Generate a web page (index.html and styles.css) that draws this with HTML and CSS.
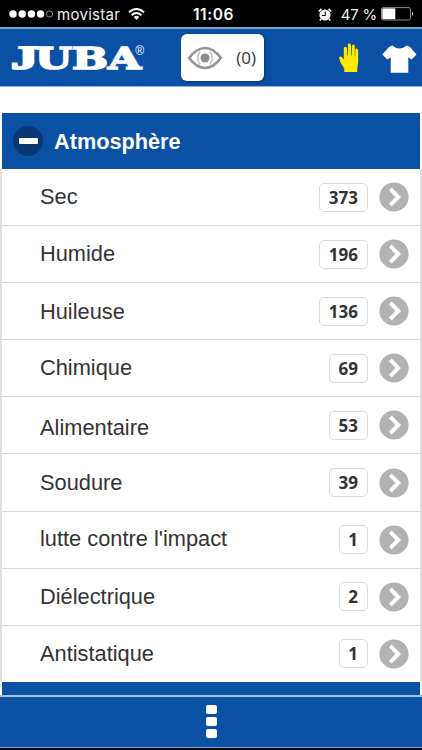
FILE: index.html
```html
<!DOCTYPE html>
<html lang="fr">
<head>
    <meta charset="UTF-8">
    <meta name="viewport" content="width=device-width, initial-scale=1">
    <title>Juba</title>

    <link rel="stylesheet" href="styles.css">
</head>
<body>
    <div class="statusBar">
        <div class="carrier">
            <svg width="44" height="10" viewBox="0 0 44 10">
                <g fill="#fff">
                    <circle cx="4" cy="5" r="3.7"/>
                    <circle cx="13.2" cy="5" r="3.7"/>
                    <circle cx="22.4" cy="5" r="3.7"/>
                    <circle cx="31.6" cy="5" r="3.7"/>
                </g>
                <circle cx="40.6" cy="5" r="3.1" fill="none" stroke="#aaa" stroke-width=".8"/>
            </svg>
            <svg class="carrierName" width="64" height="20" viewBox="0 0 64 20">
                <text x="0" y="15.5" textLength="63" lengthAdjust="spacing">movistar</text>
            </svg>
            <svg class="wifi" width="17" height="12" viewBox="0 0 17 12">
                <g fill="none" stroke="#fff" stroke-width="2">
                    <path d="M1 4.3Q8.5-2.3 16 4.3"/>
                    <path d="M3.7 7.2Q8.5 2.9 13.3 7.2"/>
                </g>
                <path d="M5.7 9Q8.5 6.6 11.3 9L8.5 12Z" fill="#fff"/>
            </svg>
        </div>
        <div class="clock">11:06</div>
        <div class="power">
            <svg width="14" height="13" viewBox="0 0 14 13">
                <circle cx="7" cy="7" r="5.6" fill="#fff"/>
                <path d="M.8 3.5L3.4.8M10.6.8l2.6 2.7M3 11l-1.2 1.5M11 11l1.2 1.5" stroke="#fff" stroke-width="1.7"/>
                <path d="M7.2 3.5v4H4" fill="none" stroke="#000" stroke-width="1.1"/>
            </svg>
            <span class="percent">47 %</span>
            <svg width="33" height="14" viewBox="0 0 33 14">
                <rect x=".5" y=".6" width="29" height="12.4" rx="1.5" fill="none" stroke="#888"/>
                <rect x="1.3" y="1.4" width="13" height="10.8" fill="#fff"/>
                <path d="M31 4.5q2 2.3 0 4.6z" fill="#fff"/>
            </svg>
        </div>
    </div>

    <header class="topBar">
        <svg class="logo" width="140" height="34" viewBox="0 0 140 34">
            <text class="logoText logoHook" x="0" y="28" textLength="27" lengthAdjust="spacingAndGlyphs">J</text>
            <text class="logoText" x="24" y="28" textLength="106" lengthAdjust="spacingAndGlyphs">UBA</text>
            <text class="logoMark" x="124.2" y="14">®</text>
        </svg>
        <div class="viewed">
            <svg width="36" height="28" viewBox="0 0 36 28">
                <path d="M2.2 14Q9.5 4 18 4T33.8 14Q26.5 24 18 24T2.2 14Z" fill="none" stroke="#949494" stroke-width="2.7"/>
                <path d="M13 7.5Q8.5 14 13 20.5M23 7.5Q27.5 14 23 20.5" fill="none" stroke="#c4c4c4" stroke-width="1.6"/>
                <circle cx="18" cy="14" r="4.5" fill="#8c8c8c"/>
            </svg>
            <span>(0)</span>
        </div>
        <div class="products">
            <svg width="20" height="30" viewBox="0 0 20 30">
                <path fill="#fee800" d="M5.3 29V25.5L1.5 19.5L0 14.3Q1.5 12.4 3.3 14.8L4.8 16.5V5.3Q5 3.8 6.3 3.8T7.9 5.3L8.4 12.5H8.9V2.2Q9.1.3 10.4.3T12 2.2L12.4 12.5H12.9V3Q13.1 1.4 14.3 1.4T15.8 3V13.3H16.2V7.2Q16.4 5.6 17.6 5.6T19.2 7.2V19L18.3 25V29Z"/>
            </svg>
            <svg width="35" height="28" viewBox="0 0 35 28">
                <path fill="#fff" d="M10.2.5Q17.5 6.5 24.8.5L28 2L34.5 9.5L29.6 14.5L26.3 12.2V27.8H8.7V12.2L5.4 14.5L.3 9.5L7 2Z"/>
            </svg>
        </div>
    </header>

    <main class="filters">
        <div class="filterTitle">
            <span class="toggle"></span>
            <h2>Atmosphère</h2>
        </div>
        <ul id="values"></ul>
        <div class="nextFilter"></div>
    </main>

    <footer class="bottomBar">
        <span class="dot"></span>
        <span class="dot"></span>
        <span class="dot"></span>
    </footer>

<script>
        // nudge is the label's vertical shift in px
        const values = [
            { name: 'Sec', count: 373, nudge: 0 },
            { name: 'Humide', count: 196, nudge: 0 },
            { name: 'Huileuse', count: 136, nudge: 1 },
            { name: 'Chimique', count: 69, nudge: 0 },
            { name: 'Alimentaire', count: 53, nudge: 3 },
            { name: 'Soudure', count: 39, nudge: 0 },
            { name: "lutte contre l'impact", count: 1, nudge: -1 },
            { name: 'Diélectrique', count: 2, nudge: 0 },
            { name: 'Antistatique', count: 1, nudge: 0 }
        ];

        document.getElementById('values').innerHTML = values.map(value => `
            <li class="row">
                <span class="name" style="transform: translateY(${value.nudge}px)">${value.name}</span>
                <span class="count">${value.count}</span>
                <svg class="arrow" width="30" height="30" viewBox="0 0 30 30">
                    <circle cx="15" cy="15" r="14.6" fill="#b2b2b2"/>
                    <path d="M11.3 6.8L19.3 15L11.3 23.2" fill="none" stroke="#fff" stroke-width="4"/>
                </svg>
            </li>
        `).join('');
</script>

</body>
</html>
```
FILE: styles.css
```css
* {
    box-sizing: border-box;
}

html {
    background: #000;
}

body {
    font-family: "Liberation Sans", Arial, sans-serif;
    margin: 0;
    height: 750px;
    display: flex;
    flex-direction: column;
    overflow: hidden;
    color: #333;
}

svg {
    display: block;
    flex: none;
}

.statusBar {
    flex: none;
    height: 27px;
    padding: 1px 8px 0 9px;
    display: flex;
    align-items: center;
    background: #000;
    color: #fff;
    font-family: Inter, sans-serif;
    font-size: 15px;
}

.carrier, .power {
    flex: 1;
    display: flex;
    align-items: center;
}

.carrierName {
    margin-left: 4px;
    fill: #eee;
    font-size: 15px;
}

.wifi {
    margin-left: 7px;
    margin-bottom: 1px;
}

.clock {
    margin-left: 4px;
    font-weight: 600;
    font-size: 15.5px;
    letter-spacing: 0.6px;
}

.power {
    justify-content: flex-end;
}

.percent {
    margin: 0 4px 0 9px;
    color: #eee;
    white-space: nowrap;
    font-size: 15px;
    letter-spacing: -0.2px;
}

.topBar {
    flex: none;
    height: 60px;
    padding: 0 5px 0 11px;
    display: flex;
    align-items: center;
    background: #0a50a4;
    border-top: 2px solid #7ba1cb;
    border-bottom: 1px solid #91afd2;
}

.logo {
    fill: #fff;
    overflow: visible;
}

.logoText {
    font-family: "DejaVu Serif", serif;
    font-weight: bold;
    font-size: 30px;
    stroke: #fff;
    stroke-width: 1.7px;
}

/* the hook of the J stays on the baseline */
.logoHook {
    font-family: "Liberation Serif", serif;
    font-size: 33px;
    stroke-width: 2px;
}

.logoMark {
    font-family: "Liberation Sans", sans-serif;
    font-size: 12px;
}

.viewed {
    width: 83px;
    height: 47px;
    margin-left: 30px;
    padding: 0 8px 0 6px;
    display: flex;
    align-items: center;
    justify-content: space-between;
    background: #fff;
    border-radius: 6px;
    box-shadow: 1px 1px 3px #063777;
    font-family: "Open Sans", sans-serif;
    font-size: 17px;
}

.products {
    margin-left: auto;
    display: flex;
    align-items: center;
    gap: 23px;
}

.products svg:last-child {
    margin-top: 3px;
}

.filters {
    flex: none;
    height: 608px;
    padding-top: 26px;
    display: flex;
    flex-direction: column;
    background: #fff;
}

.filterTitle {
    flex: none;
    height: 56px;
    margin: 0 2px;
    padding-left: 11px;
    display: flex;
    align-items: center;
    background: #0a50a4;
    color: #fff;
}

.toggle {
    width: 30px;
    height: 30px;
    border-radius: 50%;
    background: #083772;
    display: flex;
    align-items: center;
    justify-content: center;
}

.toggle::before {
    content: "";
    width: 19px;
    height: 6px;
    border-radius: 1px;
    background: #fff;
}

h2 {
    margin: 2px 0 0 11px;
    font-size: 21.7px;
}

ul {
    list-style: none;
    margin: 0;
    padding: 0;
    border: solid #e0e0e0;
    border-width: 0 2px;
}

.row {
    height: 57.1px;
    padding: 0 11px 0 38px;
    display: flex;
    align-items: center;
    border-bottom: 1.5px solid #d8d8d8;
}

.row:last-child {
    height: 56.2px;
    border-bottom: none;
}

.name {
    flex: 1;
    font-size: 21.8px;
}

.count {
    height: 29px;
    padding: 0 8.5px;
    border: 1.5px solid #dadada;
    border-radius: 5px;
    font: bold 17px/27px "Open Sans", sans-serif;
}

.arrow {
    margin-left: 11.5px;
}

.nextFilter {
    flex: 1;
    margin: 0 2px;
    background: #0a50a4;
}

.bottomBar {
    flex: none;
    height: 53px;
    padding-bottom: 1px;
    display: flex;
    flex-direction: column;
    align-items: center;
    justify-content: center;
    gap: 3px;
    background: #0a50a4;
    border-top: 2px solid #a6bfdc;
    border-bottom: 1px solid #7ba1cb;
}

.dot {
    width: 11px;
    height: 9px;
    border-radius: 2px;
    background: #fff;
}
```
